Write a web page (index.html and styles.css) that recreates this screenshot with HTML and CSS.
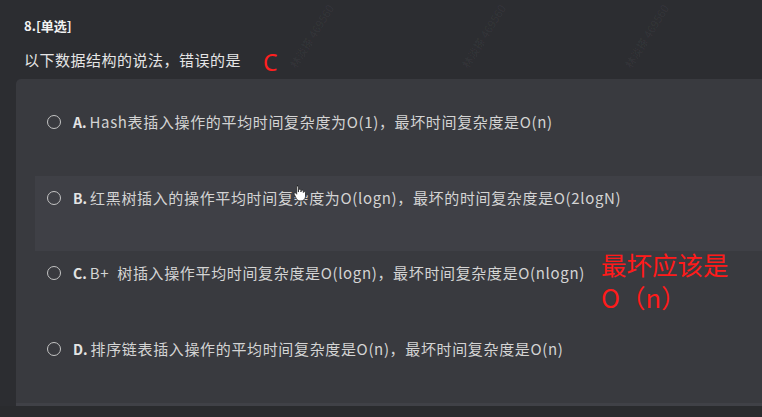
FILE: index.html
```html
<!DOCTYPE html>
<html lang="zh-CN">
<head>
<meta charset="utf-8">
<link rel="stylesheet" href="styles.css">
</head>
<body>
<div class="page">
  <div class="head">
    <div class="title">8.[单选]</div>
    <div class="question"><span>以下数据结构的说法，错误的是</span><span class="mark">C</span></div>
  </div>
  <div class="panel">
    <div class="opt">
      <span class="radio"></span><span class="key">A.</span><span class="txt">Hash表插入操作的平均时间复杂度为O(1)，最坏时间复杂度是O(n)</span>
    </div>
    <div class="opt hover">
      <span class="radio"></span><span class="key">B.</span><span class="txt">红黑树插入的操作平均时间复杂度为O(logn)，最坏的时间复杂度是O(2logN)</span>
    </div>
    <div class="opt">
      <span class="radio"></span><span class="key">C.</span><span class="txt">B+&nbsp; 树插入操作平均时间复杂度是O(logn)，最坏时间复杂度是O(nlogn)</span>
    </div>
    <div class="opt">
      <span class="radio"></span><span class="key">D.</span><span class="txt">排序链表插入操作的平均时间复杂度是O(n)，最坏时间复杂度是O(n)</span>
    </div>
    <div class="note"><div>最坏应该是</div><div>O（n）</div></div>
  </div>
  <div class="foot"></div>
  <span class="wm wm1">林淡搽 469560</span>
  <span class="wm wm2">林淡搽 469560</span>
  <span class="wm wm3">林淡搽 469560</span>
  <svg class="cursor" width="14" height="18" viewBox="0 0 14 18">
    <path d="M4 1.5c.8 0 1.3.6 1.3 1.4V8l.2-.1V6.4c0-.8.6-1.2 1.2-1.2s1.2.5 1.2 1.2V8l.1-.1V7.2c0-.7.6-1.1 1.2-1.1s1.1.5 1.1 1.1v1.3c.1-.6.6-.9 1.1-.9.6 0 1.1.5 1.1 1.1v3.6c0 2.7-1.8 4.6-4.5 4.6H7c-1.6 0-2.6-.7-3.5-2L1.2 10.3c-.3-.6 0-1.2.6-1.4.5-.2 1 0 1.3.4l.6.9V2.9c0-.8.5-1.4 1.3-1.4z" fill="#fff" stroke="#222" stroke-width="0.8"/>
  </svg>
</div>
</body>
</html>
```
FILE: styles.css
```css
* { box-sizing: border-box; }
html, body { margin: 0; padding: 0; }
body {
  background: #2c2d31;
  font-family: "Noto Sans CJK SC", "Noto Sans", sans-serif;
  overflow: hidden;
}
.page {
  position: relative;
  width: 762px;
  height: 417px;
  display: flex;
  flex-direction: column;
}
.head {
  padding: 16px 0 0 24px;
  height: 79px;
}
.title {
  font-size: 13px;
  font-weight: 700;
  color: #f2f2f2;
  line-height: 20px;
}
.question {
  margin-top: 10px;
  display: flex;
  align-items: center;
  font-size: 15px;
  letter-spacing: 0.5px;
  color: #e6e6e6;
  line-height: 22px;
}
.mark {
  margin-left: 22px;
  color: #ff1f1f;
  font-family: "Noto Sans", sans-serif;
  font-size: 23px;
  font-weight: 400;
  line-height: 22px;
  margin-top: 5px;
}
.panel {
  position: relative;
  margin-left: 16px;
  height: 327px;
  background: #393a3f;
  border-radius: 5px 0 0 0;
  padding-top: 21px;
  border-bottom: 3px solid #404147;
}
.opt {
  margin-left: 19px;
  height: 75.5px;
  padding: 11px 0 0 12px;
  display: flex;
  align-items: flex-start;
  font-size: 15px;
  color: #d4d4d4;
  line-height: 22px;
}
.opt.hover { background: #3f4046; }
.radio {
  width: 14px;
  height: 14px;
  border: 1.3px solid #c4c4c4;
  border-radius: 50%;
  margin-top: 4px;
  flex-shrink: 0;
}
.key {
  margin-left: 12px;
  font-weight: 700;
  color: #e4e4e4;
  font-size: 14px;
}
.txt {
  margin-left: 3px;
  letter-spacing: 0.65px;
}
.note {
  position: absolute;
  left: 585px;
  top: 170px;
  color: #ff1a1a;
  font-size: 25.5px;
  line-height: 30px;
  font-weight: 400;
  display: flex;
  flex-direction: column;
  gap: 3px;
}
.foot {
  flex: 1;
  background: #2a2b2e;
}
.wm {
  position: absolute;
  font-size: 11px;
  color: rgba(255,255,255,0.05);
  transform: rotate(-58deg);
  white-space: nowrap;
  pointer-events: none;
}
.wm1 { left: 275px; top: 28px; }
.wm2 { left: 447px; top: 28px; }
.wm3 { left: 610px; top: 28px; }
.cursor {
  position: absolute;
  left: 293px;
  top: 184px;
}
```
